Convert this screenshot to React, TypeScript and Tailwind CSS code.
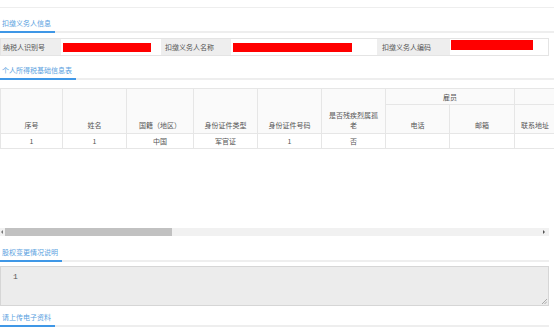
import React from "react";

const F = { fontFamily: '"Noto Sans CJK SC", "Noto Sans", sans-serif' };

function SectionTitle({ title, h, lineW }: { title: string; h: string; lineW: string }) {
  return (
    <div className={`flex items-end border-b-2 border-[#eeeeee] ${h} ${lineW}`}>
      <span className="mb-[-2px] border-b-2 border-[#3f97e6] pb-[3px] pl-[2px] pr-[4px] text-[7px] leading-[10px] text-[#5a9fe0]">
        {title}
      </span>
    </div>
  );
}

const cols = [62, 64, 67, 64, 64, 64, 64, 65, 64, 64, 64];

export default function App() {
  const th = "border border-[#e6e6e6] bg-[#fafafa] text-[7px] leading-[10px] text-[#555] font-normal";
  const td = "border border-[#e6e6e6] text-[7px] leading-[10px] text-[#555] text-center align-middle h-[15px] p-0";
  return (
    <div className="w-[554px] h-[330px] overflow-hidden bg-white relative" style={F}>
      <div className="h-[8px] border-b border-[#eeeeee]" />
      <SectionTitle title="扣缴义务人信息" h="h-[25px]" lineW="w-full" />
      <div className="mt-[5px] flex h-[18px] w-[549px] border border-[#e4e4e4] text-[7px] text-[#555]">
        <div className="flex w-[60px] items-center bg-[#eeeeee] pl-[2px]">纳税人识别号</div>
        <div className="flex w-[100px] items-center pl-[2px]">
          <div className="h-[9px] w-[88px] bg-[#ff0000]" />
        </div>
        <div className="flex w-[70px] items-center bg-[#eeeeee] pl-[4px]">扣缴义务人名称</div>
        <div className="flex w-[146px] items-center pl-[2px]">
          <div className="h-[9px] w-[119px] bg-[#ff0000]" />
        </div>
        <div className="flex w-[73px] items-center bg-[#eeeeee] pl-[5px]">扣缴义务人编码</div>
        <div className="flex flex-1 items-start pl-[1px] pt-[1px]">
          <div className="h-[10px] w-[82px] bg-[#ff0000]" />
        </div>
      </div>
      <SectionTitle title="个人所得税基础信息表" h="h-[24px]" lineW="w-full" />
      <div className="mt-[8px] h-[140px] w-full overflow-hidden">
        <table className="table-fixed border-collapse" style={{ width: cols.reduce((a, b) => a + b, 0) }}>
          <colgroup>
            {cols.map((w, i) => (
              <col key={i} style={{ width: w }} />
            ))}
          </colgroup>
          <thead>
            <tr className="h-[16px]">
              {["序号", "姓名", "国籍（地区）", "身份证件类型", "身份证件号码"].map((t) => (
                <th key={t} rowSpan={2} className={`${th} align-bottom pb-[3px] px-[2px]`}>
                  {t}
                </th>
              ))}
              <th rowSpan={2} className={`${th} align-bottom pb-[3px] px-[5px]`}>是否残疾烈属孤老</th>
              <th colSpan={2} className={`${th} align-middle`}>雇员</th>
              <th colSpan={3} className={`${th} align-middle`}></th>
            </tr>
            <tr className="h-[29px]">
              <th className={`${th} align-bottom pb-[3px]`}>电话</th>
              <th className={`${th} align-bottom pb-[3px]`}>邮箱</th>
              <th className={`${th} align-bottom pb-[3px] text-left pl-[6px]`}>联系地址</th>
              <th className={`${th} align-bottom pb-[3px]`}></th>
              <th className={`${th} align-bottom pb-[3px]`}></th>
            </tr>
          </thead>
          <tbody>
            <tr>
              {["1", "1", "中国", "军官证", "1", "否", "", "", "", "", ""].map((t, i) => (
                <td key={i} className={td}>
                  {t}
                </td>
              ))}
            </tr>
          </tbody>
        </table>
      </div>
      <div className="flex h-[8px] w-[549px] items-center bg-[#f1f1f1]">
        <div className="ml-[1px] h-0 w-0 border-y-[2px] border-r-[2px] border-y-transparent border-r-[#777]" />
        <div className="ml-[2px] h-[8px] w-[167px] bg-[#c1c1c1]" />
        <div className="flex-1" />
        <div className="mr-[4px] h-0 w-0 border-y-[2px] border-l-[2px] border-y-transparent border-l-[#555]" />
      </div>
      <SectionTitle title="股权变更情况说明" h="h-[26px]" lineW="w-[549px]" />
      <div
        className="relative mt-[4px] h-[40px] w-[549px] border border-[#d6d6d6] bg-[#ececec] pl-[12px] pt-[5px] text-[8px] leading-[10px] text-[#555]"
        style={{ fontFamily: '"Liberation Mono", monospace' }}
      >
        1
        <svg className="absolute bottom-[1px] right-[1px]" width="5" height="5" viewBox="0 0 5 5">
          <path d="M5 0 L0 5 M5 2.5 L2.5 5" stroke="#999" strokeWidth="0.8" />
        </svg>
      </div>
      <SectionTitle title="请上传电子资料" h="h-[21px]" lineW="w-[549px]" />
    </div>
  );
}
